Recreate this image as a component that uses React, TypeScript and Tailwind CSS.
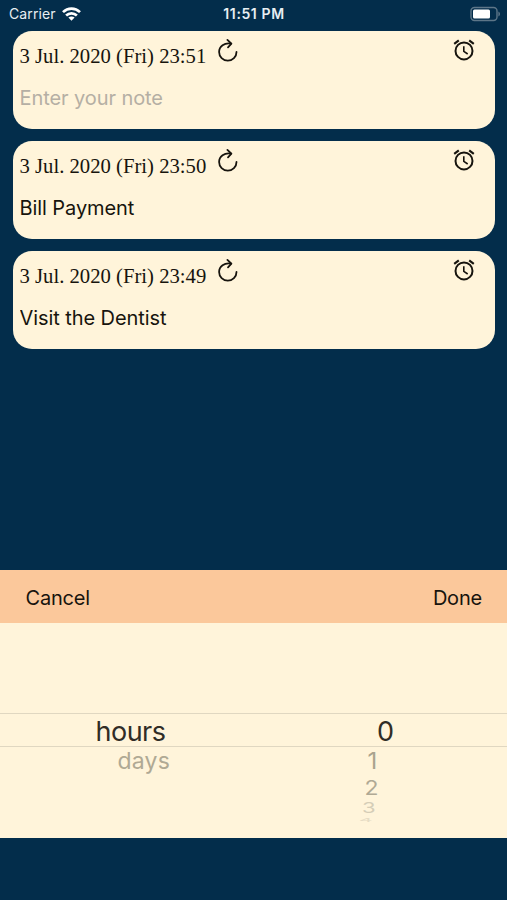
import { useState } from 'react';

const initialNotes = [
  { id: 1, date: '3 Jul. 2020 (Fri) 23:51', text: '' },
  { id: 2, date: '3 Jul. 2020 (Fri) 23:50', text: 'Bill Payment' },
  { id: 3, date: '3 Jul. 2020 (Fri) 23:49', text: 'Visit the Dentist' },
];

// Rows of the wheel below the selected one, flattened towards the bottom
const wheelRows = [
  { unit: 'days', value: '1', row: 'h-[29px]', unitClass: 'pl-[117.5px]', valueClass: 'pl-[367.5px] text-[24px] scale-y-[0.93] text-[#aaa38e]' },
  { unit: '', value: '2', row: 'h-[24px]', unitClass: '', valueClass: 'pl-[364.5px] text-[23px] scale-y-[0.86] text-[#b0a994]' },
  { unit: '', value: '3', row: 'h-[16px]', unitClass: '', valueClass: 'pl-[362px] text-[22px] scale-y-[0.66] text-[#d5cdb7]' },
  { unit: '', value: '4', row: 'h-[9px]', unitClass: '', valueClass: 'pl-[359px] text-[21px] scale-y-[0.25] text-[#e6dcc5]' },
];

function RefreshIcon() {
  return (
    <svg width="22" height="26" viewBox="0 0 22 26" fill="none" stroke="#17140e" strokeWidth="1.8" strokeLinecap="round" strokeLinejoin="round">
      <path d="M14 5.7C7.4 4.5 2.1 8.5 2.1 14A8.7 8.7 0 0 0 19.5 14" />
      <path d="M10.4 1.9L14.4 5.7L11 9.4" />
    </svg>
  );
}

function AlarmIcon() {
  return (
    <svg width="22" height="22" viewBox="0 0 22 22" fill="none" stroke="#17140e" strokeWidth="2">
      <circle cx="11" cy="11.9" r="8.5" />
      <path d="M10.8 7.2V12.3L14.7 15" strokeWidth="1.6" />
      <path d="M1.2 4.9L5.8 1.3M16.2 1.3L20.8 4.9" strokeWidth="2.1" />
    </svg>
  );
}

function StatusBar() {
  return (
    <header className="grid h-[31px] grid-cols-3 items-center pb-[4px] pl-[9px] pr-[6px] text-[#e8eef2]">
      <div className="flex items-center gap-[6px]">
        <span className="text-[14px] tracking-[0.1px]">Carrier</span>
        <svg width="19" height="14" viewBox="0 0 19 14" fill="none" stroke="#fff" strokeWidth="2.7">
          <path d="M1 5.1C5.8.5 13.2.5 18 5.1" />
          <path d="M4.1 8.5C7.2 5.6 11.8 5.6 14.9 8.5" />
          <path d="M6.4 10.6C8.1 9 10.9 9 12.6 10.6L9.5 13.7Z" fill="#fff" stroke="none" />
        </svg>
      </div>
      <span className="-ml-[2px] text-center text-[14px] font-semibold tracking-[0.6px]">11:51 PM</span>
      <svg className="justify-self-end" width="31" height="16" viewBox="0 0 31 16" fill="none">
        <rect x="1" y="1.5" width="26" height="13" rx="3.5" stroke="#5d7688" strokeWidth="1.4" />
        <rect x="3" y="3.5" width="17" height="9" rx="1.5" fill="#fff" />
        <path d="M28.4 5.5C30.5 6.4 30.5 9.6 28.4 10.5Z" fill="#5d7688" />
      </svg>
    </header>
  );
}

export default function App() {
  const [notes, setNotes] = useState(initialNotes);

  const changeNote = (id: number, text: string) => {
    setNotes(notes.map((n) => (n.id === id ? { ...n, text } : n)));
  };

  return (
    <main className="flex h-[900px] w-[507px] flex-col overflow-hidden bg-[#032d4b] font-['Inter',sans-serif] text-[#17140e]">
      <StatusBar />

      <section className="flex flex-1 flex-col gap-3 pl-[13px] pr-3">
        {notes.map((n) => (
          <article key={n.id} className="h-[98px] rounded-[19px] bg-[#fff4da] pl-[6.5px] pr-[20px]">
            <div className="flex h-[50px] items-start">
              <span className="w-[197.5px] whitespace-nowrap pt-[9px] font-['Liberation_Serif',serif] text-[20.7px] leading-[32px]">{n.date}</span>
              <div className="pt-[7px]"><RefreshIcon /></div>
              <div className="ml-auto pt-[8px]"><AlarmIcon /></div>
            </div>
            <input
              value={n.text}
              placeholder="Enter your note"
              onChange={(e) => changeNote(n.id, e.target.value)}
              className="block h-[34px] w-full bg-transparent text-[20px] tracking-[-0.08px] outline-none placeholder:text-[#b5afa4]"
            />
          </article>
        ))}
      </section>

      <section className="h-[268px] bg-[#fff4da]">
        <div className="flex h-[53px] items-center justify-between bg-[#fbc89b] pl-[25.5px] pr-[25px] pt-[2px] text-[20px] tracking-[-0.2px]">
          <button>Cancel</button>
          <button>Done</button>
        </div>
        <div className="pt-[90px]">
          <div className="grid h-[34px] items-center border-y border-[#e0d7c1] pt-[2px] text-[27px] leading-none text-[#302d26]">
            <span className="col-start-1 row-start-1 pl-[95.5px] tracking-[-0.5px]">hours</span>
            <span className="col-start-1 row-start-1 pl-[377px]">0</span>
          </div>
          {wheelRows.map((r) => (
            <div key={r.value} className={`grid content-center items-center leading-none ${r.row}`}>
              <span className={`col-start-1 row-start-1 text-[23px] tracking-[0.2px] text-[#b0a994] ${r.unitClass}`}>{r.unit}</span>
              <span className={`col-start-1 row-start-1 ${r.valueClass}`}>{r.value}</span>
            </div>
          ))}
        </div>
      </section>
      <footer className="h-[62px] shrink-0" />
    </main>
  );
}
